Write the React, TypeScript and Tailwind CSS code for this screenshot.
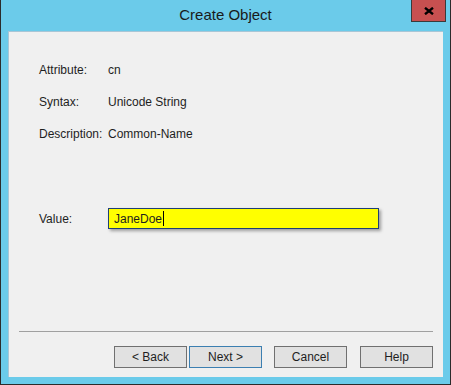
const font = { fontFamily: '"Liberation Sans", Arial, sans-serif' };

type RowProps = { label: string; value: string };

function InfoRow(props: RowProps) {
  return (
    <div className="flex h-[32px] items-center text-[12px] text-[#1e1e1e]">
      <span className="w-[69px]">{props.label}</span>
      <span>{props.value}</span>
    </div>
  );
}

function WinButton({ label, focused }: { label: string; focused?: boolean }) {
  return (
    <button
      className={
        "flex h-[22px] w-[73px] items-center justify-center bg-[#e1e1e1] text-[12px] text-[#1e1e1e] border " +
        (focused ? "border-[#3c7fb1]" : "border-[#707070]")
      }
    >
      {label}
    </button>
  );
}

export default function App() {
  return (
    <div
      className="flex h-[385px] w-[451px] flex-col border-x border-b border-[#2b2b2b] bg-[#6bcbea]"
      style={font}
    >
      {/* title bar */}
      <div className="relative flex h-[31px] shrink-0 items-center justify-center">
        <span className="text-[15px] text-[#1a1a1a]">Create Object</span>
        <div className="absolute right-[4px] top-0 flex h-[22px] w-[35px] items-center justify-center border-x border-b border-[#3a3a3a] bg-[#c75050]">
          <svg width="10" height="8" viewBox="0 0 10 8">
            <path d="M1 0.8 L9 7.2 M9 0.8 L1 7.2" stroke="#000" strokeWidth="2.4" />
          </svg>
        </div>
      </div>

      {/* client area */}
      <div className="ml-[7px] flex h-[346px] w-[435px] flex-col border-l border-t border-[#a8c6d6] bg-[#f0f0f0]">
        <div className="flex flex-col pl-[30px] pt-[22px]">
          <InfoRow label="Attribute:" value="cn" />
          <InfoRow label="Syntax:" value="Unicode String" />
          <InfoRow label="Description:" value="Common-Name" />

          <div className="mt-[58px] flex h-[21px] items-center text-[12px] text-[#1e1e1e]">
            <span className="w-[69px]">Value:</span>
            <div className="flex h-[21px] w-[271px] items-center border border-[#1f3f73] bg-[#ffff00] pl-[5px] shadow-[2px_2px_3px_rgba(0,0,0,0.35)]">
              <span>JaneDoe</span>
              <span className="ml-[1px] h-[15px] w-[1px] bg-black" />
            </div>
          </div>
        </div>

        <div className="mt-auto px-[10px] pb-[9px]">
          <div className="h-px w-full bg-[#a0a0a0]" />
          <div className="mt-[14px] flex items-start justify-end">
            <div className="flex gap-[2px]">
              <WinButton label="< Back" />
              <WinButton label="Next >" focused />
            </div>
            <div className="ml-[12px] flex">
              <WinButton label="Cancel" />
            </div>
            <div className="ml-[13px] flex">
              <WinButton label="Help" />
            </div>
          </div>
        </div>
      </div>
    </div>
  );
}
